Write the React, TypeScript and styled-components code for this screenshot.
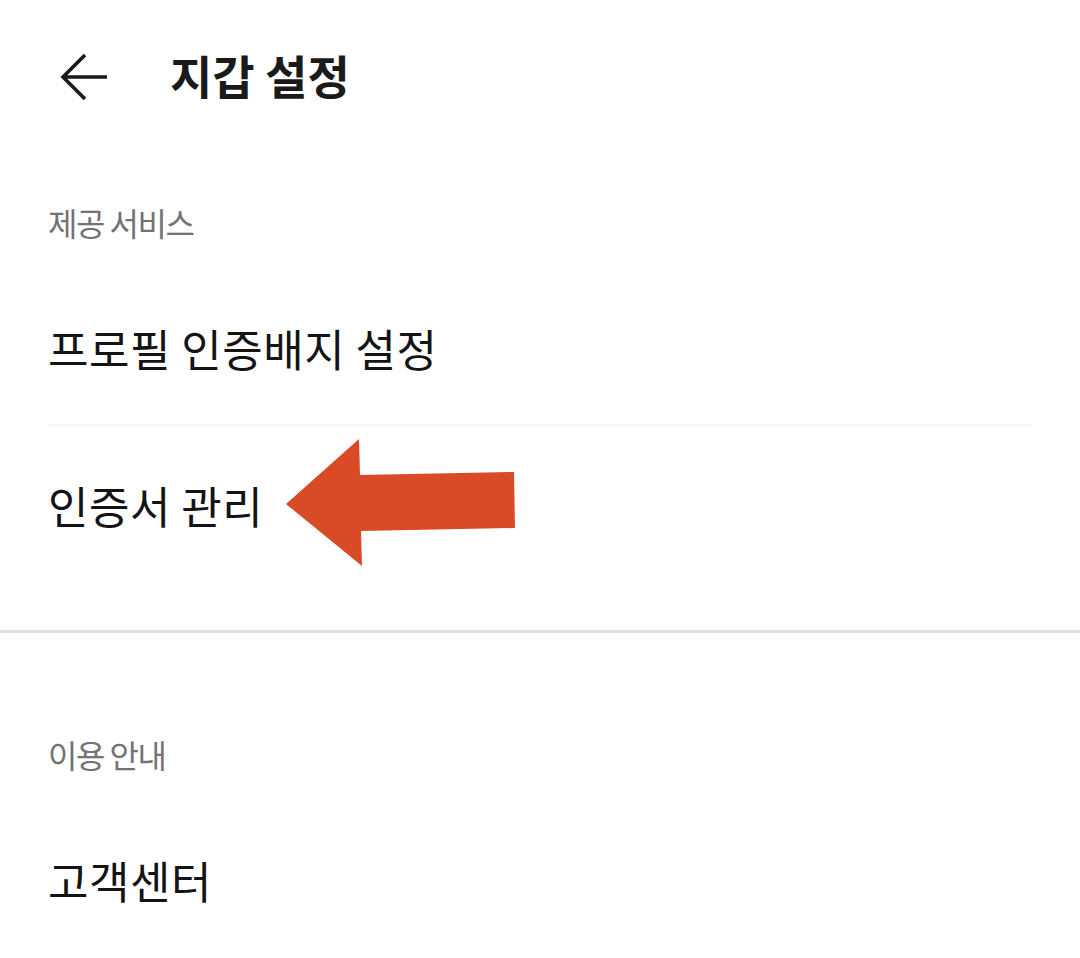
import React from "react";
import styled, { createGlobalStyle } from "styled-components";

const Global = createGlobalStyle`
  html, body { margin: 0; padding: 0; background: #ffffff; }
  body { font-family: "Noto Sans CJK KR", "Noto Sans", sans-serif; }
`;

const Page = styled.div`
  width: 1080px;
  height: 958px;
  background: #ffffff;
  overflow: hidden;
  display: flex;
  flex-direction: column;
`;

const Header = styled.header`
  height: 155px;
  display: flex;
  align-items: center;
  padding-left: 58px;
  gap: 58px;
`;

const BackButton = styled.button`
  width: 54px;
  height: 54px;
  border: none;
  background: none;
  padding: 0;
  display: flex;
  align-items: center;
  justify-content: center;
  cursor: pointer;
`;

const Title = styled.h1`
  margin: 0 0 6px;
  font-size: 46px;
  font-weight: 700;
  letter-spacing: 0;
  color: #1a1a1a;
  line-height: 1;
`;

const SectionLabel = styled.div<{ $top: number; $bottom: number }>`
  padding: ${(p) => p.$top}px 48px ${(p) => p.$bottom}px;
  height: 40px;
  display: flex;
  align-items: center;
  font-size: 32px;
  letter-spacing: -1.5px;
  color: #737373;
`;

const Item = styled.div<{ $divider?: boolean }>`
  position: relative;
  height: 156px;
  margin: 0 48px;
  display: flex;
  align-items: center;
  font-size: 44px;
  letter-spacing: 0.5px;
  color: #141414;
  border-bottom: ${(p) => (p.$divider ? "3px solid #f6f6f6" : "none")};
  box-sizing: border-box;
`;

const Spacer = styled.div<{ $h: number }>`
  height: ${(p) => p.$h}px;
`;

const SectionDivider = styled.div`
  height: 3px;
  background: #dedede;
`;

const Annotation = styled.svg`
  position: absolute;
  left: 232px;
  top: 7px;
`;

export default function App() {
  return (
    <Page>
      <Global />
      <Header>
        <BackButton aria-label="뒤로">
          <svg width="54" height="54" viewBox="0 0 54 54" fill="none">
            <path
              d="M49 27H5M27 5L5 27L27 49"
              stroke="#1a1a1a"
              strokeWidth="3.6"
              strokeLinecap="butt"
              strokeLinejoin="miter"
            />
          </svg>
        </BackButton>
        <Title>지갑 설정</Title>
      </Header>

      <SectionLabel $top={47} $bottom={30}>제공 서비스</SectionLabel>
      <Item $divider>프로필 인증배지 설정</Item>
      <Item>
        인증서 관리
        <Annotation width="240" height="136" viewBox="280 435 240 136">
          <polygon
            points="286,505 359,440 360,476 514,473 515,529 361,532 362,567"
            fill="#d94b27"
          />
        </Annotation>
      </Item>
      <Spacer $h={48} />
      <SectionDivider />
      <SectionLabel $top={101} $bottom={28}>이용 안내</SectionLabel>
      <Item>고객센터</Item>
    </Page>
  );
}
